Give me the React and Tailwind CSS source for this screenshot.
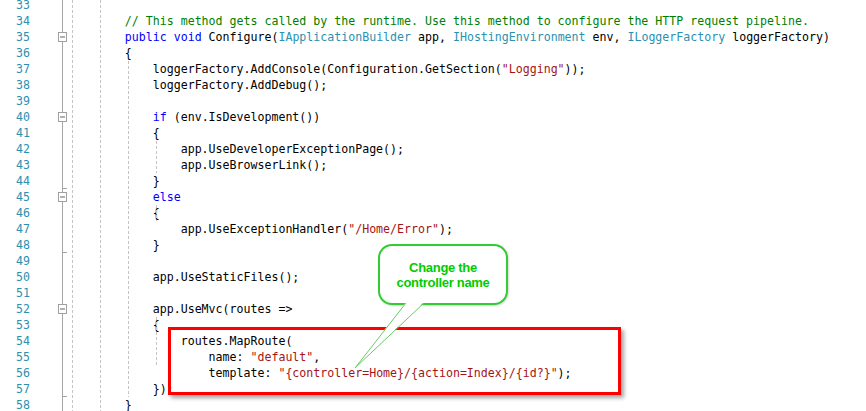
import React from "react";

const K = "text-[#0000ff]";
const T = "text-[#2b91af]";
const S = "text-[#a31515]";
const C = "text-[#008000]";

const lines = [
  { n: 33, segs: [] },
  { n: 34, segs: ["        ", ["// This method gets called by the runtime. Use this method to configure the HTTP request pipeline.", C]] },
  { n: 35, m: "box", segs: ["        ", ["public", K], " ", ["void", K], " Configure(", ["IApplicationBuilder", T], " app, ", ["IHostingEnvironment", T], " env, ", ["ILoggerFactory", T], " loggerFactory)"] },
  { n: 36, segs: ["        {"] },
  { n: 37, segs: ["            loggerFactory.AddConsole(Configuration.GetSection(", ['"Logging"', S], "));"] },
  { n: 38, segs: ["            loggerFactory.AddDebug();"] },
  { n: 39, segs: [] },
  { n: 40, m: "box", segs: ["            ", ["if", K], " (env.IsDevelopment())"] },
  { n: 41, segs: ["            {"] },
  { n: 42, segs: ["                app.UseDeveloperExceptionPage();"] },
  { n: 43, segs: ["                app.UseBrowserLink();"] },
  { n: 44, m: "tick", segs: ["            }"] },
  { n: 45, m: "box", segs: ["            ", ["else", K]] },
  { n: 46, segs: ["            {"] },
  { n: 47, segs: ["                app.UseExceptionHandler(", ['"/Home/Error"', S], ");"] },
  { n: 48, m: "tick", segs: ["            }"] },
  { n: 49, segs: [] },
  { n: 50, segs: ["            app.UseStaticFiles();"] },
  { n: 51, segs: [] },
  { n: 52, m: "box", segs: ["            app.UseMvc(routes =>"] },
  { n: 53, segs: ["            {"] },
  { n: 54, segs: ["                routes.MapRoute("] },
  { n: 55, segs: ["                    name: ", ['"default"', S], ","] },
  { n: 56, segs: ["                    template: ", ['"{controller=Home}/{action=Index}/{id?}"', S], ");"] },
  { n: 57, m: "tick", segs: ["            });"] },
  { n: 58, segs: ["        }"] },
];

// indent guides: [x, y1, y2]
const guides = [
  [72.5, 0, 411],
  [100.5, 0, 411],
  [128.5, 61, 397],
  [156.5, 141, 173],
  [156.5, 205, 221],
  [156.5, 317, 365],
];

function Margin({ m }) {
  return (
    <svg width="39" height="16" className="block shrink-0">
      <line x1="32.5" y1="0" x2="32.5" y2="16" stroke="#a5a5a5" strokeWidth="1" />
      {m === "box" && (
        <>
          <rect x="28.5" y="3.5" width="8" height="9" fill="#ffffff" stroke="#a0a0a0" strokeWidth="1" />
          <line x1="30" y1="8" x2="35" y2="8" stroke="#606060" strokeWidth="1" />
        </>
      )}
      {m === "tick" && <line x1="32" y1="15.5" x2="37" y2="15.5" stroke="#a5a5a5" strokeWidth="1" />}
    </svg>
  );
}

export default function App() {
  return (
    <div className="relative w-[866px] h-[411px] overflow-hidden bg-white font-['DejaVu_Sans_Mono',monospace] text-[11.6px] leading-[16px] text-black">
      <div className="-mt-[3px] flex flex-col">
        {lines.map((l) => (
          <div key={l.n} className="flex h-4 items-stretch">
            <div className="w-[30px] shrink-0 text-right text-[#2b91af]">{l.n}</div>
            <Margin m={l.m} />
            <div className="whitespace-pre">
              {l.segs.map((s, i) =>
                typeof s === "string" ? (
                  <span key={i}>{s}</span>
                ) : (
                  <span key={i} className={s[1]}>
                    {s[0]}
                  </span>
                )
              )}
            </div>
          </div>
        ))}
      </div>

      {/* indent guides */}
      <svg className="absolute inset-0 pointer-events-none" width="866" height="411">
        {guides.map(([x, y1, y2], i) => (
          <line key={i} x1={x} y1={y1} x2={x} y2={y2} stroke="#c4c4c4" strokeWidth="1" strokeDasharray="3 2" />
        ))}
      </svg>

      {/* red highlight box */}
      <div className="absolute left-[168px] top-[327px] w-[453px] h-[68px] border-[3px] border-[#ff0000] shadow-[3px_3px_4px_rgba(0,0,0,0.35)]" />

      {/* callout */}
      <div className="absolute left-[378px] top-[244px] w-[130px] h-[61px] rounded-[14px] border-2 border-[#33cc33] bg-white flex flex-col items-center justify-center font-['Liberation_Sans',Arial,sans-serif] font-bold text-[13px] leading-[15px] text-[#00cc00] tracking-[-0.3px] shadow-[1px_1px_2px_rgba(0,0,0,0.15)]">
        <span>Change the</span>
        <span>controller name</span>
      </div>
      <svg className="absolute inset-0 pointer-events-none" width="866" height="411">
        <polygon points="406,302 355,368 424,302" fill="#ffffff" stroke="none" />
        <polyline points="406,303 355,368 424,303" fill="none" stroke="#66cc66" strokeWidth="1" />
      </svg>
    </div>
  );
}
